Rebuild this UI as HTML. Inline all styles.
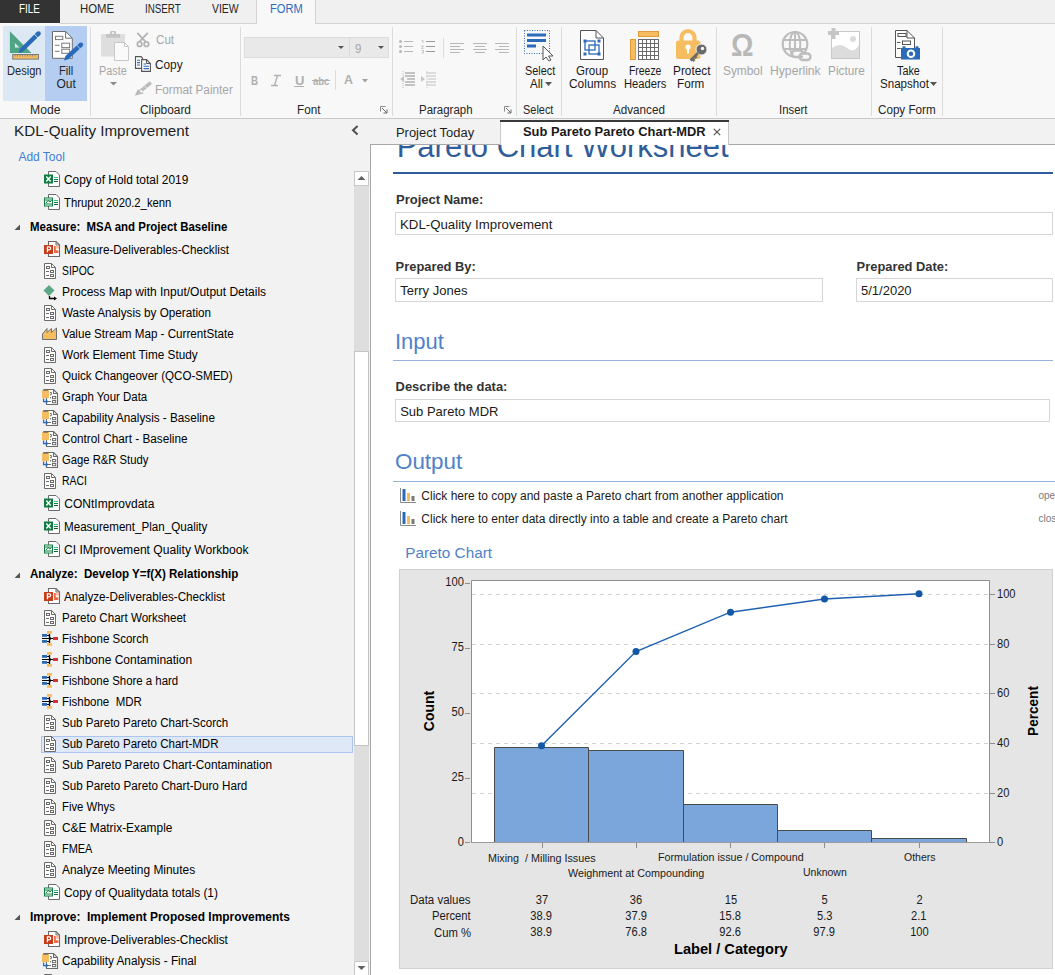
<!DOCTYPE html>
<html><head><meta charset="utf-8"><style>
html,body{margin:0;padding:0;width:1055px;height:975px;overflow:hidden;background:#fff;}
body{position:relative;font-family:"Liberation Sans",sans-serif;}
.t{position:absolute;white-space:pre;line-height:1;}
.r{position:absolute;}
svg.r{overflow:visible;}
</style></head><body>
<div class="r" style="left:0px;top:0px;width:1055px;height:23px;background:#f0f0f0"></div>
<div class="r" style="left:0px;top:0px;width:60px;height:23px;background:#333333"></div>
<div class="t" style="left:19.10px;top:3.00px;font-size:12px;color:#ffffff;transform:scaleX(0.8247);transform-origin:0 0;">FILE</div>
<div class="t" style="left:79.50px;top:3.00px;font-size:12px;color:#262626;transform:scaleX(0.9472);transform-origin:0 0;">HOME</div>
<div class="t" style="left:145.40px;top:3.00px;font-size:12px;color:#262626;transform:scaleX(0.8153);transform-origin:0 0;">INSERT</div>
<div class="t" style="left:212.30px;top:3.00px;font-size:12px;color:#262626;transform:scaleX(0.8706);transform-origin:0 0;">VIEW</div>
<div class="r" style="left:0px;top:23px;width:1055px;height:95px;background:#f8f8f8"></div>
<div class="r" style="left:60px;top:23px;width:197px;height:1px;background:#d2d2d2"></div>
<div class="r" style="left:315px;top:23px;width:740px;height:1px;background:#d2d2d2"></div>
<div class="r" style="left:256px;top:0px;width:1px;height:24px;background:#d2d2d2"></div>
<div class="r" style="left:315px;top:0px;width:1px;height:24px;background:#d2d2d2"></div>
<div class="r" style="left:257px;top:0px;width:58px;height:24px;background:#f8f8f8"></div>
<div class="t" style="left:270.30px;top:3.00px;font-size:12px;color:#2b6bc6;transform:scaleX(0.9256);transform-origin:0 0;">FORM</div>
<div class="r" style="left:0px;top:118px;width:1055px;height:1px;background:#c8c8c8"></div>
<div class="r" style="left:90px;top:27px;width:1px;height:89px;background:#dcdcdc"></div>
<div class="r" style="left:240px;top:27px;width:1px;height:89px;background:#dcdcdc"></div>
<div class="r" style="left:392px;top:27px;width:1px;height:89px;background:#dcdcdc"></div>
<div class="r" style="left:516px;top:27px;width:1px;height:89px;background:#dcdcdc"></div>
<div class="r" style="left:561px;top:27px;width:1px;height:89px;background:#dcdcdc"></div>
<div class="r" style="left:716px;top:27px;width:1px;height:89px;background:#dcdcdc"></div>
<div class="r" style="left:871px;top:27px;width:1px;height:89px;background:#dcdcdc"></div>
<div class="r" style="left:942px;top:27px;width:1px;height:89px;background:#dcdcdc"></div>
<div class="t" style="left:29.60px;top:104.00px;font-size:12px;color:#262626;transform:scaleX(1.0160);transform-origin:0 0;">Mode</div>
<div class="t" style="left:139.60px;top:104.00px;font-size:12px;color:#262626;transform:scaleX(0.9929);transform-origin:0 0;">Clipboard</div>
<div class="t" style="left:296.50px;top:104.00px;font-size:12px;color:#262626;transform:scaleX(0.9787);transform-origin:0 0;">Font</div>
<div class="t" style="left:419.30px;top:104.00px;font-size:12px;color:#262626;transform:scaleX(0.9547);transform-origin:0 0;">Paragraph</div>
<div class="t" style="left:523.40px;top:104.00px;font-size:12px;color:#262626;transform:scaleX(0.9115);transform-origin:0 0;">Select</div>
<div class="t" style="left:612.50px;top:104.00px;font-size:12px;color:#262626;transform:scaleX(0.9724);transform-origin:0 0;">Advanced</div>
<div class="t" style="left:779.40px;top:104.00px;font-size:12px;color:#262626;transform:scaleX(0.9463);transform-origin:0 0;">Insert</div>
<div class="t" style="left:877.60px;top:104.00px;font-size:12px;color:#262626;transform:scaleX(0.9706);transform-origin:0 0;">Copy Form</div>
<svg class="r" style="left:380px;top:106px" width="8" height="8" viewBox="0 0 8 8"><path d="M0.5 0.5H5.5M0.5 0.5V5.5" stroke="#8a8a8a" fill="none"/><path d="M2 2L7 7M7 3.5V7H3.5" stroke="#6a6a6a" fill="none"/></svg>
<svg class="r" style="left:504px;top:106px" width="8" height="8" viewBox="0 0 8 8"><path d="M0.5 0.5H5.5M0.5 0.5V5.5" stroke="#8a8a8a" fill="none"/><path d="M2 2L7 7M7 3.5V7H3.5" stroke="#6a6a6a" fill="none"/></svg>
<div class="r" style="left:3px;top:26px;width:42px;height:75px;background:#dde8f5"></div>
<div class="r" style="left:45px;top:26px;width:42px;height:75px;background:#b4cdf0"></div>
<svg class="r" style="left:0px;top:25px" width="95" height="40" viewBox="0 0 95 40"><path d="M9.9 6.3V27.9H31.5Z" fill="#4fa583"/><path d="M14.9 18V22.5H19.4Z" fill="#dde8f5"/><rect x="12.7" y="29.5" width="25.8" height="4.6" fill="#f6bd60" stroke="#7a7a7a" stroke-width="1"/><path d="M15 29.5V31.5M17.5 29.5V31.5M20 29.5V31.5M22.5 29.5V31.5M25 29.5V31.5M27.5 29.5V31.5M30 29.5V31.5M32.5 29.5V31.5M35 29.5V31.5" stroke="#7a7a7a" stroke-width="0.8"/><path d="M18.60,28.00 L23.00,26.77 L40.14,9.97 L37.06,6.83 L19.92,23.63 Z" fill="#2a6ab8"/><circle cx="38.60" cy="8.40" r="2.20" fill="#2a6ab8"/><path d="M38.10,12.89 L34.10,8.81" stroke="#dde8f5" stroke-width="0.9"/></svg>
<svg class="r" style="left:0px;top:25px" width="95" height="40" viewBox="0 0 95 40"><path d="M52.5 6.5H65.6L72.3 13.2V33.3H52.5Z" fill="#fff" stroke="#6e6e6e" stroke-width="1"/><path d="M65.6 6.5V13.2H72.3" fill="none" stroke="#6e6e6e"/><rect x="55.5" y="11.3" width="7.3" height="3.3" fill="none" stroke="#7a7a7a"/><path d="M55 20.3H59.5M55 26.3H59.5" stroke="#7a7a7a"/><rect x="61.8" y="18.2" width="7.8" height="4.4" fill="none" stroke="#7a7a7a"/><rect x="61.8" y="24.2" width="7.8" height="4.1" fill="none" stroke="#7a7a7a"/><path d="M64.00,35.40 L68.43,34.29 L82.50,21.21 L79.50,17.99 L65.43,31.07 Z" fill="#2a6ab8"/><circle cx="81.00" cy="19.60" r="2.20" fill="#2a6ab8"/><path d="M80.38,24.08 L76.49,19.89" stroke="#b4cdf0" stroke-width="0.9"/></svg>
<div class="t" style="left:6.80px;top:65.00px;font-size:12px;color:#262626;transform:scaleX(0.9236);transform-origin:0 0;">Design</div>
<div class="t" style="left:58.50px;top:65.00px;font-size:12px;color:#262626;transform:scaleX(0.9263);transform-origin:0 0;">Fill</div>
<div class="t" style="left:56.40px;top:78.00px;font-size:12px;color:#262626;transform-origin:0 0;">Out</div>
<svg class="r" style="left:100px;top:30px" width="31" height="32" viewBox="0 0 31 32"><rect x="1" y="4" width="24" height="22.5" fill="#dedede"/><rect x="6" y="4" width="14" height="3.7" fill="#c4c4c4"/><rect x="10" y="1" width="6" height="4" rx="1" fill="#c4c4c4"/><rect x="12" y="2.2" width="2" height="1.6" fill="#f8f8f8"/><path d="M14.5 12.5H24.5L28.5 16.5V30.5H14.5Z" fill="#fafafa" stroke="#c8c8c8" stroke-width="1"/><path d="M24.5 12.5V16.5H28.5" fill="none" stroke="#c8c8c8"/></svg>
<div class="t" style="left:99.30px;top:65.00px;font-size:12px;color:#a6a6a6;transform:scaleX(0.9027);transform-origin:0 0;">Paste</div>
<svg class="r" style="left:110px;top:82px" width="7" height="4" viewBox="0 0 7 4"><path d="M0 0H7L3.5 3.5Z" fill="#8a8a8a"/></svg>
<svg class="r" style="left:135px;top:32px" width="16" height="16" viewBox="0 0 16 16"><path d="M2.3 0.8L10.7 9.8M12.7 0.8L4.3 9.8" stroke="#b4b4b4" stroke-width="1.8"/><circle cx="4.6" cy="12.2" r="2.3" fill="none" stroke="#b4b4b4" stroke-width="1.7"/><circle cx="11.4" cy="12.2" r="2.3" fill="none" stroke="#b4b4b4" stroke-width="1.7"/></svg>
<div class="t" style="left:155.60px;top:34.00px;font-size:12px;color:#a6a6a6;transform:scaleX(0.9692);transform-origin:0 0;">Cut</div>
<svg class="r" style="left:134px;top:56px" width="18" height="17" viewBox="0 0 18 17"><path d="M1.5 0.6H7L8.5 2.1V12.4H1.5Z" fill="#fff" stroke="#555" stroke-width="1.1"/><path d="M3 4.2H6M3 6.6H6M3 9H6" stroke="#2a6ab8" stroke-width="1.1"/><path d="M7.6 3.6H12.5L16.4 7.5V15.4H7.6Z" fill="#fff" stroke="#555" stroke-width="1.1"/><path d="M12.5 3.6V7.5H16.4" fill="none" stroke="#555" stroke-width="1"/><path d="M9.5 8H12M9.5 10.3H15M9.5 12.6H15" stroke="#2a6ab8" stroke-width="1.1"/></svg>
<div class="t" style="left:155.40px;top:59.00px;font-size:12px;color:#1a1a1a;transform:scaleX(0.9852);transform-origin:0 0;">Copy</div>
<svg class="r" style="left:134px;top:81px" width="18" height="16" viewBox="0 0 18 16"><path d="M0.8 14.8L3.8 8.2L10 12.2Z" fill="#bababa"/><path d="M5.5 11L16.8 1.6" stroke="#bababa" stroke-width="3.4"/><circle cx="7.3" cy="10.2" r="1.3" fill="#f8f8f8"/><path d="M10.8 5.2L12.6 7" stroke="#f8f8f8" stroke-width="0.8"/></svg>
<div class="t" style="left:155.40px;top:84.00px;font-size:12px;color:#a6a6a6;transform:scaleX(0.9803);transform-origin:0 0;">Format Painter</div>
<div class="r" style="left:244px;top:37px;width:145px;height:21px;background:#e9e9e9;box-sizing:border-box;border:1px solid #dcdcdc"></div>
<div class="r" style="left:349px;top:38px;width:1px;height:19px;background:#dcdcdc"></div>
<svg class="r" style="left:338px;top:46px" width="6" height="3" viewBox="0 0 6 3"><path d="M0 0H6L3 3Z" fill="#555"/></svg>
<svg class="r" style="left:378px;top:46px" width="6" height="3" viewBox="0 0 6 3"><path d="M0 0H6L3 3Z" fill="#555"/></svg>
<div class="t" style="left:354.60px;top:43.00px;font-size:12px;color:#a6a6a6;transform:scaleX(0.9589);transform-origin:0 0;">9</div>
<div class="t" style="left:251.40px;top:75.00px;font-size:12px;color:#b0b0b0;font-weight:bold;transform:scaleX(0.8193);transform-origin:0 0;">B</div>
<svg class="r" style="left:270px;top:75px" width="12" height="11" viewBox="0 0 12 11"><path d="M4 0.5H11M1 10.5H8M7.5 0.5L4.5 10.5" stroke="#b0b0b0" stroke-width="1.3" fill="none"/></svg>
<div class="t" style="left:294.60px;top:75.00px;font-size:12px;color:#b0b0b0;font-weight:bold;transform:scaleX(1.0847);transform-origin:0 0;">U</div>
<div class="r" style="left:294px;top:86px;width:10px;height:1px;background:#b0b0b0"></div>
<div class="t" style="left:312.80px;top:76.00px;font-size:11px;color:#b0b0b0;font-weight:bold;transform:scaleX(0.8652);transform-origin:0 0;">abc</div>
<div class="r" style="left:312px;top:80px;width:18px;height:1px;background:#b0b0b0"></div>
<div class="r" style="left:335px;top:70px;width:1px;height:20px;background:#dcdcdc"></div>
<div class="t" style="left:344.00px;top:73.00px;font-size:13px;color:#b0b0b0;font-weight:bold;transform:scaleX(0.9586);transform-origin:0 0;">A</div>
<svg class="r" style="left:362px;top:79px" width="6" height="3.5" viewBox="0 0 6 3.5"><path d="M0 0H6L3 3.5Z" fill="#a0a0a0"/></svg>
<svg class="r" style="left:399px;top:40px" width="15" height="14" viewBox="0 0 15 14"><circle cx="1.5" cy="1.5" r="1.5" fill="#b8b8b8"/><circle cx="1.5" cy="6.5" r="1.5" fill="#b8b8b8"/><circle cx="1.5" cy="11.5" r="1.5" fill="#b8b8b8"/><path d="M5 1.5H14M5 6.5H14M5 11.5H14" stroke="#b8b8b8"/></svg>
<svg class="r" style="left:421px;top:40px" width="15" height="14" viewBox="0 0 15 14"><path d="M0.5 0.5H2V3 M0 6H2.5L0.5 8.5H2.5 M0.5 10.5H2.5V13H0.5" stroke="#b8b8b8" fill="none" stroke-width="0.8"/><path d="M5 1.5H14M5 6.5H14M5 11.5H14" stroke="#9a9a9a" stroke-width="1.2"/></svg>
<div class="r" style="left:443px;top:38px;width:1px;height:20px;background:#dcdcdc"></div>
<svg class="r" style="left:450px;top:42px" width="15" height="11" viewBox="0 0 15 11"><path d="M0 1.5H14M0 4.5H10M0 7.5H14M0 10.5H10" stroke="#b8b8b8" stroke-width="1"/></svg>
<svg class="r" style="left:473px;top:42px" width="15" height="11" viewBox="0 0 15 11"><path d="M0 1.5H14M2 4.5H12M0 7.5H14M2 10.5H12" stroke="#b8b8b8" stroke-width="1"/></svg>
<svg class="r" style="left:495px;top:42px" width="15" height="11" viewBox="0 0 15 11"><path d="M0 1.5H14M4 4.5H14M0 7.5H14M4 10.5H14" stroke="#b8b8b8" stroke-width="1"/></svg>
<svg class="r" style="left:399px;top:71px" width="17" height="17" viewBox="0 0 17 17"><path d="M6 2H16M6 5H16M8 8H16M6 11H16M6 14H16" stroke="#8e8e8e" stroke-width="1.2"/><path d="M1 8L5 5V11Z" fill="#c6c6c6"/><path d="M4 0V17" stroke="#bdbdbd" stroke-dasharray="1 1"/></svg>
<svg class="r" style="left:420px;top:71px" width="17" height="17" viewBox="0 0 17 17"><path d="M6 2H16M6 5H16M8 8H16M6 11H16M6 14H16" stroke="#c0c0c0" stroke-width="1.2"/><path d="M5 8L1 5V11Z" fill="#c6c6c6"/><path d="M7 0V17" stroke="#cfcfcf" stroke-dasharray="1 1"/></svg>
<svg class="r" style="left:523px;top:29px" width="34" height="33" viewBox="0 0 34 33"><rect x="1.5" y="1.5" width="25" height="23" fill="none" stroke="#2a6ab8" stroke-dasharray="1 1.5"/><rect x="4" y="4.5" width="19" height="3" fill="#2a6ab8"/><rect x="4" y="10" width="19" height="3" fill="#2a6ab8"/><rect x="4" y="15.5" width="9" height="3" fill="#2a6ab8"/><path d="M20 17 L20 31 L23 28 L26 32 L28 31 L25.5 27 L30 27 Z" fill="#fff" stroke="#555" stroke-width="1"/></svg>
<div class="t" style="left:524.50px;top:65.00px;font-size:12px;color:#1a1a1a;transform:scaleX(0.9055);transform-origin:0 0;">Select</div>
<div class="t" style="left:529.60px;top:78.00px;font-size:12px;color:#1a1a1a;transform:scaleX(0.9598);transform-origin:0 0;">All</div>
<svg class="r" style="left:545px;top:82px" width="7" height="4" viewBox="0 0 7 4"><path d="M0 0H7L3.5 4Z" fill="#555"/></svg>
<svg class="r" style="left:579px;top:29px" width="27" height="32" viewBox="0 0 27 32"><path d="M1.5 1.5H17L24.5 9V30.5H1.5Z" fill="#fff" stroke="#555"/><path d="M17 1.5V9H24.5" fill="none" stroke="#555"/><rect x="6" y="12" width="10" height="9" fill="none" stroke="#2a6ab8" stroke-width="1.3"/><rect x="10" y="16" width="10" height="9" fill="none" stroke="#2a6ab8" stroke-width="1.3"/><rect x="4.5" y="10.5" width="3" height="3" fill="#2a6ab8"/><rect x="18.5" y="10.5" width="3" height="3" fill="#2a6ab8"/><rect x="4.5" y="23.5" width="3" height="3" fill="#2a6ab8"/><rect x="18.5" y="23.5" width="3" height="3" fill="#2a6ab8"/></svg>
<div class="t" style="left:575.70px;top:65.00px;font-size:12px;color:#1a1a1a;transform:scaleX(0.9624);transform-origin:0 0;">Group</div>
<div class="t" style="left:568.90px;top:78.00px;font-size:12px;color:#1a1a1a;transform:scaleX(0.9947);transform-origin:0 0;">Columns</div>
<svg class="r" style="left:629px;top:30px" width="32" height="31" viewBox="0 0 32 31"><rect x="9.5" y="1.5" width="20" height="5" fill="#f6bd60" stroke="#e39a3b"/><rect x="1.5" y="9.5" width="5" height="20" fill="#f6bd60" stroke="#e39a3b"/><rect x="9.5" y="9.5" width="20" height="20" fill="#fff" stroke="#6a6a6a"/><path d="M13.5 9.5V29.5M17.5 9.5V29.5M21.5 9.5V29.5M25.5 9.5V29.5M9.5 13.5H29.5M9.5 17.5H29.5M9.5 21.5H29.5M9.5 25.5H29.5" stroke="#6a6a6a"/></svg>
<div class="t" style="left:628.60px;top:65.00px;font-size:12px;color:#1a1a1a;transform:scaleX(0.8675);transform-origin:0 0;">Freeze</div>
<div class="t" style="left:623.50px;top:78.00px;font-size:12px;color:#1a1a1a;transform:scaleX(0.9326);transform-origin:0 0;">Headers</div>
<svg class="r" style="left:675px;top:27px" width="33" height="35" viewBox="0 0 33 35"><path d="M6.5 15V10.5A6.5 6.5 0 0 1 19.5 10.5V15" fill="none" stroke="#f6bd60" stroke-width="4.2"/><rect x="1" y="13.5" width="24.5" height="18.5" rx="2.5" fill="#f6bd60"/><circle cx="13" cy="20" r="2.6" fill="#fff"/><rect x="12" y="20" width="2" height="6.5" fill="#fff"/><circle cx="26.5" cy="22.5" r="5.5" fill="#6a6a6a" stroke="#f8f8f8" stroke-width="1"/><circle cx="27.5" cy="21.5" r="1.7" fill="#f8f8f8"/><path d="M23 26L15.5 33.5M17 31.5L19.5 34M19.5 29L21.5 31" stroke="#6a6a6a" stroke-width="2.6"/></svg>
<div class="t" style="left:672.60px;top:65.00px;font-size:12px;color:#1a1a1a;transform:scaleX(0.9864);transform-origin:0 0;">Protect</div>
<div class="t" style="left:677.40px;top:78.00px;font-size:12px;color:#1a1a1a;transform:scaleX(0.9751);transform-origin:0 0;">Form</div>
<div class="t" style="left:730.50px;top:30.00px;font-size:31px;color:#b8b8b8;font-weight:bold;transform:scaleX(0.9053);transform-origin:0 0;">Ω</div>
<svg class="r" style="left:779px;top:28px" width="34" height="34" viewBox="0 0 34 34"><circle cx="16" cy="16.3" r="12.3" fill="none" stroke="#bdbdbd" stroke-width="2.2"/><ellipse cx="16" cy="16.3" rx="5.3" ry="12.3" fill="none" stroke="#bdbdbd" stroke-width="2"/><path d="M4 12H28M4 21H28M16 4V28.5" stroke="#bdbdbd" stroke-width="2"/><rect x="13" y="22.5" width="11" height="6.5" rx="3.2" fill="#f8f8f8" stroke="#bdbdbd" stroke-width="2.4"/><rect x="20.5" y="25.5" width="11" height="6.5" rx="3.2" fill="#f8f8f8" stroke="#bdbdbd" stroke-width="2.4"/><path d="M20.5 28.7H24" stroke="#bdbdbd" stroke-width="2.4"/></svg>
<svg class="r" style="left:828px;top:28px" width="34" height="33" viewBox="0 0 34 33"><rect x="3.5" y="3.5" width="28" height="27" fill="#fff" stroke="#c8c8c8"/><path d="M4 30 V20 Q12 14 19 20 T31 17 V30Z" fill="#dcdcdc"/><circle cx="25" cy="11" r="3" fill="#dcdcdc"/><rect x="0" y="3" width="11" height="4" fill="#c6c6c6"/><rect x="3.5" y="0" width="4" height="11" fill="#c6c6c6"/></svg>
<div class="t" style="left:723.20px;top:65.00px;font-size:12px;color:#a6a6a6;transform:scaleX(0.9896);transform-origin:0 0;">Symbol</div>
<div class="t" style="left:770.30px;top:65.00px;font-size:12px;color:#a6a6a6;transform:scaleX(1.0137);transform-origin:0 0;">Hyperlink</div>
<div class="t" style="left:828.30px;top:65.00px;font-size:12px;color:#a6a6a6;transform:scaleX(0.9853);transform-origin:0 0;">Picture</div>
<svg class="r" style="left:893px;top:29px" width="29" height="33" viewBox="0 0 29 33"><path d="M2.5 1.5H14L21.5 9V28.5H2.5Z" fill="#fff" stroke="#555"/><path d="M14 1.5V9H21.5" fill="none" stroke="#555"/><rect x="5" y="4.5" width="8" height="3" fill="none" stroke="#555"/><path d="M4 13.5H7.5M4 19.5H7.5" stroke="#555"/><rect x="9.5" y="12" width="8" height="3.5" fill="none" stroke="#555"/><path d="M4 19.5H7.5" stroke="#555"/><rect x="8" y="19" width="19" height="11.5" fill="#2a6ab8"/><rect x="9.5" y="17.3" width="3" height="2.5" fill="#2a6ab8"/><rect x="22.5" y="17.3" width="3" height="2.5" fill="#2a6ab8"/><circle cx="18" cy="24.8" r="4.3" fill="#fff"/><circle cx="18" cy="24.8" r="2.2" fill="#2a6ab8"/></svg>
<div class="t" style="left:896.50px;top:65.00px;font-size:12px;color:#1a1a1a;transform:scaleX(0.8995);transform-origin:0 0;">Take</div>
<div class="t" style="left:879.50px;top:78.00px;font-size:12px;color:#1a1a1a;transform:scaleX(0.9643);transform-origin:0 0;">Snapshot</div>
<svg class="r" style="left:930px;top:82px" width="7" height="4" viewBox="0 0 7 4"><path d="M0 0H7L3.5 4Z" fill="#555"/></svg>
<div class="r" style="left:0px;top:119px;width:370px;height:856px;background:#f2f2f2"></div>
<div class="t" style="left:13.60px;top:123.00px;font-size:15px;color:#1e1e1e;transform:scaleX(1.0141);transform-origin:0 0;">KDL-Quality Improvement</div>
<svg class="r" style="left:351px;top:125px" width="9" height="11" viewBox="0 0 9 11"><path d="M6.6 0.9L2 5.2L6.6 9.5" stroke="#505050" stroke-width="2" fill="none"/></svg>
<div class="t" style="left:18.40px;top:151.00px;font-size:12px;color:#3d7fd8;transform-origin:0 0;">Add Tool</div>
<div class="r" style="left:41px;top:736px;width:312px;height:17px;background:#dfe8f6;box-sizing:border-box;border:1px solid #a8c6ef"></div>
<svg class="r" style="left:44px;top:171px" width="17" height="17" viewBox="0 0 17 17"><path d="M4.5 0.5H12L15.5 4V15.5H4.5Z" fill="#fff" stroke="#6b6b6b"/><path d="M10 6.5H14" stroke="#33c481"/><path d="M10 8.5H14" stroke="#107c41"/><path d="M10 10.5H14" stroke="#185c37"/><rect x="0" y="3.5" width="9" height="9" fill="#107c41"/><path d="M2.3 5.5L6.7 10.5M6.7 5.5L2.3 10.5" stroke="#fff" stroke-width="1.4"/></svg>
<div class="t" style="left:64.30px;top:174.00px;font-size:12px;color:#000;transform:scaleX(0.9911);transform-origin:0 0;">Copy of Hold total 2019</div>
<svg class="r" style="left:44px;top:194px" width="17" height="17" viewBox="0 0 17 17"><path d="M4.5 0.5H12L15.5 4V15.5H4.5Z" fill="#fff" stroke="#6b6b6b"/><path d="M10 6.5H14" stroke="#33c481"/><path d="M10 8.5H14" stroke="#107c41"/><path d="M10 10.5H14" stroke="#185c37"/><rect x="0.5" y="4" width="8" height="8" fill="#fff" stroke="#107c41"/><path d="M1 6H8M1 10H8" stroke="#107c41"/><path d="M2 9L4 6.5L6 8L7.5 6.5" stroke="#107c41" fill="none"/></svg>
<div class="t" style="left:64.30px;top:197.00px;font-size:12px;color:#000;transform:scaleX(0.9413);transform-origin:0 0;">Thruput 2020.2_kenn</div>
<svg class="r" style="left:14px;top:224px" width="7" height="7" viewBox="0 0 7 7"><path d="M6 0.5V6H0.5Z" fill="#555"/></svg>
<div class="t" style="left:30.40px;top:221.00px;font-size:12px;color:#000;font-weight:bold;transform:scaleX(0.9533);transform-origin:0 0;">Measure:  MSA and Project Baseline</div>
<svg class="r" style="left:44px;top:241px" width="17" height="17" viewBox="0 0 17 17"><path d="M4.5 0.5H12L15.5 4V15.5H4.5Z" fill="#fff" stroke="#6b6b6b" stroke-width="1.1"/><path d="M12 0.5V4H15.5" fill="none" stroke="#6b6b6b" stroke-width="1"/><path d="M10 5V12H14.3A3.8 3.8 0 0 0 14.3 9.2H11.8V5Z" fill="#ed6c47"/><rect x="12.2" y="4.5" width="2.8" height="3.2" fill="#ffb8a0"/><rect x="0" y="4" width="9" height="9" fill="#c43e1c"/><path d="M3.4 11.2V5.8H5.2A1.5 1.5 0 0 1 5.2 8.8H3.4" stroke="#fff" stroke-width="1.2" fill="none"/></svg>
<div class="t" style="left:64.30px;top:244.00px;font-size:12px;color:#000;transform:scaleX(0.9741);transform-origin:0 0;">Measure-Deliverables-Checklist</div>
<svg class="r" style="left:44px;top:263px" width="13" height="17" viewBox="0 0 13 17"><path d="M0.5 0.5H7.5L11.5 4.5V15.5H0.5Z" fill="#fff" stroke="#6b6b6b"/><path d="M7.5 0.5V4.5H11.5" fill="none" stroke="#6b6b6b"/><rect x="2.5" y="3.5" width="3" height="2" fill="none" stroke="#6b6b6b"/><path d="M2 8.5H5M2 12.5H5" stroke="#6b6b6b"/><rect x="6.5" y="7.5" width="3" height="2" fill="none" stroke="#6b6b6b"/><rect x="6.5" y="11.5" width="3" height="2" fill="none" stroke="#6b6b6b"/></svg>
<div class="t" style="left:62.00px;top:265.00px;font-size:12px;color:#000;transform:scaleX(0.8623);transform-origin:0 0;">SIPOC</div>
<svg class="r" style="left:43px;top:285px" width="16" height="17" viewBox="0 0 16 17"><path d="M6 0L11.5 5.5L6 11L0.5 5.5Z" fill="#5aa886"/><path d="M6.5 11V13.5H12" stroke="#000" stroke-width="1.3" fill="none"/><path d="M11 11.5L14 13.5L11 15.5Z" fill="#000"/></svg>
<div class="t" style="left:62.00px;top:286.00px;font-size:12px;color:#000;transform-origin:0 0;">Process Map with Input/Output Details</div>
<svg class="r" style="left:44px;top:305px" width="13" height="17" viewBox="0 0 13 17"><path d="M0.5 0.5H7.5L11.5 4.5V15.5H0.5Z" fill="#fff" stroke="#6b6b6b"/><path d="M7.5 0.5V4.5H11.5" fill="none" stroke="#6b6b6b"/><rect x="2.5" y="3.5" width="3" height="2" fill="none" stroke="#6b6b6b"/><path d="M2 8.5H5M2 12.5H5" stroke="#6b6b6b"/><rect x="6.5" y="7.5" width="3" height="2" fill="none" stroke="#6b6b6b"/><rect x="6.5" y="11.5" width="3" height="2" fill="none" stroke="#6b6b6b"/></svg>
<div class="t" style="left:62.00px;top:307.00px;font-size:12px;color:#000;transform:scaleX(0.9741);transform-origin:0 0;">Waste Analysis by Operation</div>
<svg class="r" style="left:42px;top:327px" width="16" height="13" viewBox="0 0 16 13"><path d="M0.5 12.5V7L5 1.5V5.5L9.5 1.5V5.5L14.5 1V12.5Z" fill="#f6bd60" stroke="#707070" stroke-linejoin="round"/></svg>
<div class="t" style="left:62.00px;top:328.00px;font-size:12px;color:#000;transform:scaleX(0.9684);transform-origin:0 0;">Value Stream Map - CurrentState</div>
<svg class="r" style="left:44px;top:347px" width="13" height="17" viewBox="0 0 13 17"><path d="M0.5 0.5H7.5L11.5 4.5V15.5H0.5Z" fill="#fff" stroke="#6b6b6b"/><path d="M7.5 0.5V4.5H11.5" fill="none" stroke="#6b6b6b"/><rect x="2.5" y="3.5" width="3" height="2" fill="none" stroke="#6b6b6b"/><path d="M2 8.5H5M2 12.5H5" stroke="#6b6b6b"/><rect x="6.5" y="7.5" width="3" height="2" fill="none" stroke="#6b6b6b"/><rect x="6.5" y="11.5" width="3" height="2" fill="none" stroke="#6b6b6b"/></svg>
<div class="t" style="left:62.00px;top:349.00px;font-size:12px;color:#000;transform:scaleX(0.9791);transform-origin:0 0;">Work Element Time Study</div>
<svg class="r" style="left:44px;top:368px" width="13" height="17" viewBox="0 0 13 17"><path d="M0.5 0.5H7.5L11.5 4.5V15.5H0.5Z" fill="#fff" stroke="#6b6b6b"/><path d="M7.5 0.5V4.5H11.5" fill="none" stroke="#6b6b6b"/><rect x="2.5" y="3.5" width="3" height="2" fill="none" stroke="#6b6b6b"/><path d="M2 8.5H5M2 12.5H5" stroke="#6b6b6b"/><rect x="6.5" y="7.5" width="3" height="2" fill="none" stroke="#6b6b6b"/><rect x="6.5" y="11.5" width="3" height="2" fill="none" stroke="#6b6b6b"/></svg>
<div class="t" style="left:62.00px;top:370.00px;font-size:12px;color:#000;transform:scaleX(0.9654);transform-origin:0 0;">Quick Changeover (QCO-SMED)</div>
<svg class="r" style="left:42px;top:389px" width="17" height="17" viewBox="0 0 17 17"><path d="M4.5 15.5V0.5H11.5L15.5 4.5V15.5Z" fill="#fff" stroke="#6b6b6b" stroke-width="1.1"/><path d="M11.5 0.5V4.5H15.5" fill="none" stroke="#6b6b6b" stroke-width="1.1"/><path d="M8 3.5H9.3V5.8H8" fill="none" stroke="#6b6b6b"/><circle cx="8.6" cy="8.7" r="0.7" fill="#6b6b6b"/><rect x="10.5" y="7.5" width="3.2" height="2.2" fill="none" stroke="#6b6b6b"/><path d="M6 12.5H9" stroke="#6b6b6b"/><rect x="10.5" y="11.5" width="3.2" height="2.2" fill="none" stroke="#6b6b6b"/><rect x="0" y="1" width="7" height="8" fill="#f6bd60"/><rect x="1.3" y="0" width="4.6" height="1.7" fill="#6b6b6b"/><path d="M1.6 9.5V12.6H5" stroke="#2a6ab8" stroke-width="1.3" fill="none"/><path d="M3.8 10.8L5.6 12.6L3.8 14.4" stroke="#2a6ab8" stroke-width="1.1" fill="none"/></svg>
<div class="t" style="left:62.00px;top:391.00px;font-size:12px;color:#000;transform:scaleX(0.9530);transform-origin:0 0;">Graph Your Data</div>
<svg class="r" style="left:42px;top:410px" width="17" height="17" viewBox="0 0 17 17"><path d="M4.5 15.5V0.5H11.5L15.5 4.5V15.5Z" fill="#fff" stroke="#6b6b6b" stroke-width="1.1"/><path d="M11.5 0.5V4.5H15.5" fill="none" stroke="#6b6b6b" stroke-width="1.1"/><path d="M8 3.5H9.3V5.8H8" fill="none" stroke="#6b6b6b"/><circle cx="8.6" cy="8.7" r="0.7" fill="#6b6b6b"/><rect x="10.5" y="7.5" width="3.2" height="2.2" fill="none" stroke="#6b6b6b"/><path d="M6 12.5H9" stroke="#6b6b6b"/><rect x="10.5" y="11.5" width="3.2" height="2.2" fill="none" stroke="#6b6b6b"/><rect x="0" y="1" width="7" height="8" fill="#f6bd60"/><rect x="1.3" y="0" width="4.6" height="1.7" fill="#6b6b6b"/><path d="M1.6 9.5V12.6H5" stroke="#2a6ab8" stroke-width="1.3" fill="none"/><path d="M3.8 10.8L5.6 12.6L3.8 14.4" stroke="#2a6ab8" stroke-width="1.1" fill="none"/></svg>
<div class="t" style="left:62.00px;top:412.00px;font-size:12px;color:#000;transform:scaleX(0.9754);transform-origin:0 0;">Capability Analysis - Baseline</div>
<svg class="r" style="left:42px;top:431px" width="17" height="17" viewBox="0 0 17 17"><path d="M4.5 15.5V0.5H11.5L15.5 4.5V15.5Z" fill="#fff" stroke="#6b6b6b" stroke-width="1.1"/><path d="M11.5 0.5V4.5H15.5" fill="none" stroke="#6b6b6b" stroke-width="1.1"/><path d="M8 3.5H9.3V5.8H8" fill="none" stroke="#6b6b6b"/><circle cx="8.6" cy="8.7" r="0.7" fill="#6b6b6b"/><rect x="10.5" y="7.5" width="3.2" height="2.2" fill="none" stroke="#6b6b6b"/><path d="M6 12.5H9" stroke="#6b6b6b"/><rect x="10.5" y="11.5" width="3.2" height="2.2" fill="none" stroke="#6b6b6b"/><rect x="0" y="1" width="7" height="8" fill="#f6bd60"/><rect x="1.3" y="0" width="4.6" height="1.7" fill="#6b6b6b"/><path d="M1.6 9.5V12.6H5" stroke="#2a6ab8" stroke-width="1.3" fill="none"/><path d="M3.8 10.8L5.6 12.6L3.8 14.4" stroke="#2a6ab8" stroke-width="1.1" fill="none"/></svg>
<div class="t" style="left:62.00px;top:433.00px;font-size:12px;color:#000;transform:scaleX(0.9800);transform-origin:0 0;">Control Chart - Baseline</div>
<svg class="r" style="left:42px;top:452px" width="17" height="17" viewBox="0 0 17 17"><path d="M4.5 15.5V0.5H11.5L15.5 4.5V15.5Z" fill="#fff" stroke="#6b6b6b" stroke-width="1.1"/><path d="M11.5 0.5V4.5H15.5" fill="none" stroke="#6b6b6b" stroke-width="1.1"/><path d="M8 3.5H9.3V5.8H8" fill="none" stroke="#6b6b6b"/><circle cx="8.6" cy="8.7" r="0.7" fill="#6b6b6b"/><rect x="10.5" y="7.5" width="3.2" height="2.2" fill="none" stroke="#6b6b6b"/><path d="M6 12.5H9" stroke="#6b6b6b"/><rect x="10.5" y="11.5" width="3.2" height="2.2" fill="none" stroke="#6b6b6b"/><rect x="0" y="1" width="7" height="8" fill="#f6bd60"/><rect x="1.3" y="0" width="4.6" height="1.7" fill="#6b6b6b"/><path d="M1.6 9.5V12.6H5" stroke="#2a6ab8" stroke-width="1.3" fill="none"/><path d="M3.8 10.8L5.6 12.6L3.8 14.4" stroke="#2a6ab8" stroke-width="1.1" fill="none"/></svg>
<div class="t" style="left:62.00px;top:454.00px;font-size:12px;color:#000;transform:scaleX(0.9376);transform-origin:0 0;">Gage R&amp;R Study</div>
<svg class="r" style="left:44px;top:473px" width="13" height="17" viewBox="0 0 13 17"><path d="M0.5 0.5H7.5L11.5 4.5V15.5H0.5Z" fill="#fff" stroke="#6b6b6b"/><path d="M7.5 0.5V4.5H11.5" fill="none" stroke="#6b6b6b"/><rect x="2.5" y="3.5" width="3" height="2" fill="none" stroke="#6b6b6b"/><path d="M2 8.5H5M2 12.5H5" stroke="#6b6b6b"/><rect x="6.5" y="7.5" width="3" height="2" fill="none" stroke="#6b6b6b"/><rect x="6.5" y="11.5" width="3" height="2" fill="none" stroke="#6b6b6b"/></svg>
<div class="t" style="left:62.00px;top:475.00px;font-size:12px;color:#000;transform:scaleX(0.8720);transform-origin:0 0;">RACI</div>
<svg class="r" style="left:44px;top:495px" width="17" height="17" viewBox="0 0 17 17"><path d="M4.5 0.5H12L15.5 4V15.5H4.5Z" fill="#fff" stroke="#6b6b6b"/><path d="M10 6.5H14" stroke="#33c481"/><path d="M10 8.5H14" stroke="#107c41"/><path d="M10 10.5H14" stroke="#185c37"/><rect x="0" y="3.5" width="9" height="9" fill="#107c41"/><path d="M2.3 5.5L6.7 10.5M6.7 5.5L2.3 10.5" stroke="#fff" stroke-width="1.4"/></svg>
<div class="t" style="left:64.30px;top:498.00px;font-size:12px;color:#000;transform-origin:0 0;">CONtImprovdata</div>
<svg class="r" style="left:44px;top:518px" width="17" height="17" viewBox="0 0 17 17"><path d="M4.5 0.5H12L15.5 4V15.5H4.5Z" fill="#fff" stroke="#6b6b6b"/><path d="M10 6.5H14" stroke="#33c481"/><path d="M10 8.5H14" stroke="#107c41"/><path d="M10 10.5H14" stroke="#185c37"/><rect x="0" y="3.5" width="9" height="9" fill="#107c41"/><path d="M2.3 5.5L6.7 10.5M6.7 5.5L2.3 10.5" stroke="#fff" stroke-width="1.4"/></svg>
<div class="t" style="left:64.30px;top:521.00px;font-size:12px;color:#000;transform:scaleX(0.9684);transform-origin:0 0;">Measurement_Plan_Quality</div>
<svg class="r" style="left:44px;top:541px" width="17" height="17" viewBox="0 0 17 17"><path d="M4.5 0.5H12L15.5 4V15.5H4.5Z" fill="#fff" stroke="#6b6b6b"/><path d="M10 6.5H14" stroke="#33c481"/><path d="M10 8.5H14" stroke="#107c41"/><path d="M10 10.5H14" stroke="#185c37"/><rect x="0.5" y="4" width="8" height="8" fill="#fff" stroke="#107c41"/><path d="M1 6H8M1 10H8" stroke="#107c41"/><path d="M2 9L4 6.5L6 8L7.5 6.5" stroke="#107c41" fill="none"/></svg>
<div class="t" style="left:64.30px;top:544.00px;font-size:12px;color:#000;transform:scaleX(1.0072);transform-origin:0 0;">CI IMprovement Quality Workbook</div>
<svg class="r" style="left:14px;top:572px" width="7" height="7" viewBox="0 0 7 7"><path d="M6 0.5V6H0.5Z" fill="#555"/></svg>
<div class="t" style="left:30.40px;top:568.00px;font-size:12px;color:#000;font-weight:bold;transform:scaleX(0.9641);transform-origin:0 0;">Analyze:  Develop Y=f(X) Relationship</div>
<svg class="r" style="left:44px;top:588px" width="17" height="17" viewBox="0 0 17 17"><path d="M4.5 0.5H12L15.5 4V15.5H4.5Z" fill="#fff" stroke="#6b6b6b" stroke-width="1.1"/><path d="M12 0.5V4H15.5" fill="none" stroke="#6b6b6b" stroke-width="1"/><path d="M10 5V12H14.3A3.8 3.8 0 0 0 14.3 9.2H11.8V5Z" fill="#ed6c47"/><rect x="12.2" y="4.5" width="2.8" height="3.2" fill="#ffb8a0"/><rect x="0" y="4" width="9" height="9" fill="#c43e1c"/><path d="M3.4 11.2V5.8H5.2A1.5 1.5 0 0 1 5.2 8.8H3.4" stroke="#fff" stroke-width="1.2" fill="none"/></svg>
<div class="t" style="left:64.30px;top:591.00px;font-size:12px;color:#000;transform:scaleX(0.9740);transform-origin:0 0;">Analyze-Deliverables-Checklist</div>
<svg class="r" style="left:44px;top:610px" width="13" height="17" viewBox="0 0 13 17"><path d="M0.5 0.5H7.5L11.5 4.5V15.5H0.5Z" fill="#fff" stroke="#6b6b6b"/><path d="M7.5 0.5V4.5H11.5" fill="none" stroke="#6b6b6b"/><rect x="2.5" y="3.5" width="3" height="2" fill="none" stroke="#6b6b6b"/><path d="M2 8.5H5M2 12.5H5" stroke="#6b6b6b"/><rect x="6.5" y="7.5" width="3" height="2" fill="none" stroke="#6b6b6b"/><rect x="6.5" y="11.5" width="3" height="2" fill="none" stroke="#6b6b6b"/></svg>
<div class="t" style="left:62.00px;top:612.00px;font-size:12px;color:#000;transform:scaleX(0.9657);transform-origin:0 0;">Pareto Chart Worksheet</div>
<svg class="r" style="left:42px;top:631px" width="17" height="16" viewBox="0 0 17 16"><rect x="5" y="0" width="5" height="2.8" fill="#f6bd60"/><rect x="0" y="3" width="5" height="2.8" fill="#2a6ab8"/><rect x="0" y="9" width="5" height="2.8" fill="#2a6ab8"/><rect x="5" y="12" width="5" height="2.8" fill="#f6bd60"/><path d="M0 7.5H11M5 4.5H7.5M5 10.5H7.5" stroke="#000" stroke-width="1"/><path d="M7.5 3V12" stroke="#000" stroke-width="1.3"/><path d="M7.8 5.8L9.8 7.5L7.8 9.2Z" fill="#000"/><rect x="11" y="6" width="5" height="3" fill="#d13438"/></svg>
<div class="t" style="left:62.00px;top:633.00px;font-size:12px;color:#000;transform:scaleX(0.9584);transform-origin:0 0;">Fishbone Scorch</div>
<svg class="r" style="left:42px;top:652px" width="17" height="16" viewBox="0 0 17 16"><rect x="5" y="0" width="5" height="2.8" fill="#f6bd60"/><rect x="0" y="3" width="5" height="2.8" fill="#2a6ab8"/><rect x="0" y="9" width="5" height="2.8" fill="#2a6ab8"/><rect x="5" y="12" width="5" height="2.8" fill="#f6bd60"/><path d="M0 7.5H11M5 4.5H7.5M5 10.5H7.5" stroke="#000" stroke-width="1"/><path d="M7.5 3V12" stroke="#000" stroke-width="1.3"/><path d="M7.8 5.8L9.8 7.5L7.8 9.2Z" fill="#000"/><rect x="11" y="6" width="5" height="3" fill="#d13438"/></svg>
<div class="t" style="left:62.00px;top:654.00px;font-size:12px;color:#000;transform-origin:0 0;">Fishbone Contamination</div>
<svg class="r" style="left:42px;top:673px" width="17" height="16" viewBox="0 0 17 16"><rect x="5" y="0" width="5" height="2.8" fill="#f6bd60"/><rect x="0" y="3" width="5" height="2.8" fill="#2a6ab8"/><rect x="0" y="9" width="5" height="2.8" fill="#2a6ab8"/><rect x="5" y="12" width="5" height="2.8" fill="#f6bd60"/><path d="M0 7.5H11M5 4.5H7.5M5 10.5H7.5" stroke="#000" stroke-width="1"/><path d="M7.5 3V12" stroke="#000" stroke-width="1.3"/><path d="M7.8 5.8L9.8 7.5L7.8 9.2Z" fill="#000"/><rect x="11" y="6" width="5" height="3" fill="#d13438"/></svg>
<div class="t" style="left:62.00px;top:675.00px;font-size:12px;color:#000;transform:scaleX(0.9518);transform-origin:0 0;">Fishbone Shore a hard</div>
<svg class="r" style="left:42px;top:694px" width="17" height="16" viewBox="0 0 17 16"><rect x="5" y="0" width="5" height="2.8" fill="#f6bd60"/><rect x="0" y="3" width="5" height="2.8" fill="#2a6ab8"/><rect x="0" y="9" width="5" height="2.8" fill="#2a6ab8"/><rect x="5" y="12" width="5" height="2.8" fill="#f6bd60"/><path d="M0 7.5H11M5 4.5H7.5M5 10.5H7.5" stroke="#000" stroke-width="1"/><path d="M7.5 3V12" stroke="#000" stroke-width="1.3"/><path d="M7.8 5.8L9.8 7.5L7.8 9.2Z" fill="#000"/><rect x="11" y="6" width="5" height="3" fill="#d13438"/></svg>
<div class="t" style="left:62.00px;top:696.00px;font-size:12px;color:#000;transform:scaleX(0.9572);transform-origin:0 0;">Fishbone  MDR</div>
<svg class="r" style="left:44px;top:715px" width="13" height="17" viewBox="0 0 13 17"><path d="M0.5 0.5H7.5L11.5 4.5V15.5H0.5Z" fill="#fff" stroke="#6b6b6b"/><path d="M7.5 0.5V4.5H11.5" fill="none" stroke="#6b6b6b"/><rect x="2.5" y="3.5" width="3" height="2" fill="none" stroke="#6b6b6b"/><path d="M2 8.5H5M2 12.5H5" stroke="#6b6b6b"/><rect x="6.5" y="7.5" width="3" height="2" fill="none" stroke="#6b6b6b"/><rect x="6.5" y="11.5" width="3" height="2" fill="none" stroke="#6b6b6b"/></svg>
<div class="t" style="left:62.00px;top:717.00px;font-size:12px;color:#000;transform:scaleX(0.9620);transform-origin:0 0;">Sub Pareto Pareto Chart-Scorch</div>
<svg class="r" style="left:44px;top:736px" width="13" height="17" viewBox="0 0 13 17"><path d="M0.5 0.5H7.5L11.5 4.5V15.5H0.5Z" fill="#fff" stroke="#6b6b6b"/><path d="M7.5 0.5V4.5H11.5" fill="none" stroke="#6b6b6b"/><rect x="2.5" y="3.5" width="3" height="2" fill="none" stroke="#6b6b6b"/><path d="M2 8.5H5M2 12.5H5" stroke="#6b6b6b"/><rect x="6.5" y="7.5" width="3" height="2" fill="none" stroke="#6b6b6b"/><rect x="6.5" y="11.5" width="3" height="2" fill="none" stroke="#6b6b6b"/></svg>
<div class="t" style="left:62.00px;top:738.00px;font-size:12px;color:#000;transform:scaleX(0.9617);transform-origin:0 0;">Sub Pareto Pareto Chart-MDR</div>
<svg class="r" style="left:44px;top:757px" width="13" height="17" viewBox="0 0 13 17"><path d="M0.5 0.5H7.5L11.5 4.5V15.5H0.5Z" fill="#fff" stroke="#6b6b6b"/><path d="M7.5 0.5V4.5H11.5" fill="none" stroke="#6b6b6b"/><rect x="2.5" y="3.5" width="3" height="2" fill="none" stroke="#6b6b6b"/><path d="M2 8.5H5M2 12.5H5" stroke="#6b6b6b"/><rect x="6.5" y="7.5" width="3" height="2" fill="none" stroke="#6b6b6b"/><rect x="6.5" y="11.5" width="3" height="2" fill="none" stroke="#6b6b6b"/></svg>
<div class="t" style="left:62.00px;top:759.00px;font-size:12px;color:#000;transform:scaleX(0.9878);transform-origin:0 0;">Sub Pareto Pareto Chart-Contamination</div>
<svg class="r" style="left:44px;top:778px" width="13" height="17" viewBox="0 0 13 17"><path d="M0.5 0.5H7.5L11.5 4.5V15.5H0.5Z" fill="#fff" stroke="#6b6b6b"/><path d="M7.5 0.5V4.5H11.5" fill="none" stroke="#6b6b6b"/><rect x="2.5" y="3.5" width="3" height="2" fill="none" stroke="#6b6b6b"/><path d="M2 8.5H5M2 12.5H5" stroke="#6b6b6b"/><rect x="6.5" y="7.5" width="3" height="2" fill="none" stroke="#6b6b6b"/><rect x="6.5" y="11.5" width="3" height="2" fill="none" stroke="#6b6b6b"/></svg>
<div class="t" style="left:62.00px;top:780.00px;font-size:12px;color:#000;transform:scaleX(0.9714);transform-origin:0 0;">Sub Pareto Pareto Chart-Duro Hard</div>
<svg class="r" style="left:44px;top:799px" width="13" height="17" viewBox="0 0 13 17"><path d="M0.5 0.5H7.5L11.5 4.5V15.5H0.5Z" fill="#fff" stroke="#6b6b6b"/><path d="M7.5 0.5V4.5H11.5" fill="none" stroke="#6b6b6b"/><rect x="2.5" y="3.5" width="3" height="2" fill="none" stroke="#6b6b6b"/><path d="M2 8.5H5M2 12.5H5" stroke="#6b6b6b"/><rect x="6.5" y="7.5" width="3" height="2" fill="none" stroke="#6b6b6b"/><rect x="6.5" y="11.5" width="3" height="2" fill="none" stroke="#6b6b6b"/></svg>
<div class="t" style="left:62.00px;top:801.00px;font-size:12px;color:#000;transform:scaleX(0.9428);transform-origin:0 0;">Five Whys</div>
<svg class="r" style="left:44px;top:820px" width="13" height="17" viewBox="0 0 13 17"><path d="M0.5 0.5H7.5L11.5 4.5V15.5H0.5Z" fill="#fff" stroke="#6b6b6b"/><path d="M7.5 0.5V4.5H11.5" fill="none" stroke="#6b6b6b"/><rect x="2.5" y="3.5" width="3" height="2" fill="none" stroke="#6b6b6b"/><path d="M2 8.5H5M2 12.5H5" stroke="#6b6b6b"/><rect x="6.5" y="7.5" width="3" height="2" fill="none" stroke="#6b6b6b"/><rect x="6.5" y="11.5" width="3" height="2" fill="none" stroke="#6b6b6b"/></svg>
<div class="t" style="left:62.00px;top:822.00px;font-size:12px;color:#000;transform:scaleX(0.9914);transform-origin:0 0;">C&amp;E Matrix-Example</div>
<svg class="r" style="left:44px;top:841px" width="13" height="17" viewBox="0 0 13 17"><path d="M0.5 0.5H7.5L11.5 4.5V15.5H0.5Z" fill="#fff" stroke="#6b6b6b"/><path d="M7.5 0.5V4.5H11.5" fill="none" stroke="#6b6b6b"/><rect x="2.5" y="3.5" width="3" height="2" fill="none" stroke="#6b6b6b"/><path d="M2 8.5H5M2 12.5H5" stroke="#6b6b6b"/><rect x="6.5" y="7.5" width="3" height="2" fill="none" stroke="#6b6b6b"/><rect x="6.5" y="11.5" width="3" height="2" fill="none" stroke="#6b6b6b"/></svg>
<div class="t" style="left:62.00px;top:843.00px;font-size:12px;color:#000;transform:scaleX(0.9120);transform-origin:0 0;">FMEA</div>
<svg class="r" style="left:44px;top:862px" width="13" height="17" viewBox="0 0 13 17"><path d="M0.5 0.5H7.5L11.5 4.5V15.5H0.5Z" fill="#fff" stroke="#6b6b6b"/><path d="M7.5 0.5V4.5H11.5" fill="none" stroke="#6b6b6b"/><rect x="2.5" y="3.5" width="3" height="2" fill="none" stroke="#6b6b6b"/><path d="M2 8.5H5M2 12.5H5" stroke="#6b6b6b"/><rect x="6.5" y="7.5" width="3" height="2" fill="none" stroke="#6b6b6b"/><rect x="6.5" y="11.5" width="3" height="2" fill="none" stroke="#6b6b6b"/></svg>
<div class="t" style="left:62.00px;top:864.00px;font-size:12px;color:#000;transform:scaleX(0.9927);transform-origin:0 0;">Analyze Meeting Minutes</div>
<svg class="r" style="left:44px;top:884px" width="17" height="17" viewBox="0 0 17 17"><path d="M4.5 0.5H12L15.5 4V15.5H4.5Z" fill="#fff" stroke="#6b6b6b"/><path d="M10 6.5H14" stroke="#33c481"/><path d="M10 8.5H14" stroke="#107c41"/><path d="M10 10.5H14" stroke="#185c37"/><rect x="0.5" y="4" width="8" height="8" fill="#fff" stroke="#107c41"/><path d="M1 6H8M1 10H8" stroke="#107c41"/><path d="M2 9L4 6.5L6 8L7.5 6.5" stroke="#107c41" fill="none"/></svg>
<div class="t" style="left:64.30px;top:887.00px;font-size:12px;color:#000;transform:scaleX(0.9903);transform-origin:0 0;">Copy of Qualitydata totals (1)</div>
<svg class="r" style="left:14px;top:914px" width="7" height="7" viewBox="0 0 7 7"><path d="M6 0.5V6H0.5Z" fill="#555"/></svg>
<div class="t" style="left:30.40px;top:911.00px;font-size:12px;color:#000;font-weight:bold;transform:scaleX(0.9943);transform-origin:0 0;">Improve:  Implement Proposed Improvements</div>
<svg class="r" style="left:44px;top:931px" width="17" height="17" viewBox="0 0 17 17"><path d="M4.5 0.5H12L15.5 4V15.5H4.5Z" fill="#fff" stroke="#6b6b6b" stroke-width="1.1"/><path d="M12 0.5V4H15.5" fill="none" stroke="#6b6b6b" stroke-width="1"/><path d="M10 5V12H14.3A3.8 3.8 0 0 0 14.3 9.2H11.8V5Z" fill="#ed6c47"/><rect x="12.2" y="4.5" width="2.8" height="3.2" fill="#ffb8a0"/><rect x="0" y="4" width="9" height="9" fill="#c43e1c"/><path d="M3.4 11.2V5.8H5.2A1.5 1.5 0 0 1 5.2 8.8H3.4" stroke="#fff" stroke-width="1.2" fill="none"/></svg>
<div class="t" style="left:64.30px;top:934.00px;font-size:12px;color:#000;transform:scaleX(0.9870);transform-origin:0 0;">Improve-Deliverables-Checklist</div>
<svg class="r" style="left:42px;top:953px" width="17" height="17" viewBox="0 0 17 17"><path d="M4.5 15.5V0.5H11.5L15.5 4.5V15.5Z" fill="#fff" stroke="#6b6b6b" stroke-width="1.1"/><path d="M11.5 0.5V4.5H15.5" fill="none" stroke="#6b6b6b" stroke-width="1.1"/><path d="M8 3.5H9.3V5.8H8" fill="none" stroke="#6b6b6b"/><circle cx="8.6" cy="8.7" r="0.7" fill="#6b6b6b"/><rect x="10.5" y="7.5" width="3.2" height="2.2" fill="none" stroke="#6b6b6b"/><path d="M6 12.5H9" stroke="#6b6b6b"/><rect x="10.5" y="11.5" width="3.2" height="2.2" fill="none" stroke="#6b6b6b"/><rect x="0" y="1" width="7" height="8" fill="#f6bd60"/><rect x="1.3" y="0" width="4.6" height="1.7" fill="#6b6b6b"/><path d="M1.6 9.5V12.6H5" stroke="#2a6ab8" stroke-width="1.3" fill="none"/><path d="M3.8 10.8L5.6 12.6L3.8 14.4" stroke="#2a6ab8" stroke-width="1.1" fill="none"/></svg>
<div class="t" style="left:62.00px;top:955.00px;font-size:12px;color:#000;transform:scaleX(0.9837);transform-origin:0 0;">Capability Analysis - Final</div>
<svg class="r" style="left:44px;top:974px" width="13" height="17" viewBox="0 0 13 17"><path d="M0.5 0.5H7.5L11.5 4.5V15.5H0.5Z" fill="#fff" stroke="#6b6b6b"/><path d="M7.5 0.5V4.5H11.5" fill="none" stroke="#6b6b6b"/><rect x="2.5" y="3.5" width="3" height="2" fill="none" stroke="#6b6b6b"/><path d="M2 8.5H5M2 12.5H5" stroke="#6b6b6b"/><rect x="6.5" y="7.5" width="3" height="2" fill="none" stroke="#6b6b6b"/><rect x="6.5" y="11.5" width="3" height="2" fill="none" stroke="#6b6b6b"/></svg>
<div class="t" style="left:62.00px;top:976.00px;font-size:12px;color:#000;transform-origin:0 0;">Measure Meeting Minutes</div>
<div class="r" style="left:354px;top:171px;width:15px;height:804px;background:#dedede"></div>
<div class="r" style="left:354px;top:171px;width:15px;height:15px;background:#fff;box-sizing:border-box;border:1px solid #c8c8c8"></div>
<svg class="r" style="left:357px;top:175px" width="9" height="6" viewBox="0 0 9 6"><path d="M0.5 5H8.5L4.5 1Z" fill="#606060"/></svg>
<div class="r" style="left:354px;top:351px;width:15px;height:395px;background:#fff;box-sizing:border-box;border:1px solid #c4c4c4"></div>
<div class="r" style="left:354px;top:961px;width:15px;height:15px;background:#fff;box-sizing:border-box;border:1px solid #c8c8c8"></div>
<svg class="r" style="left:357px;top:965px" width="9" height="6" viewBox="0 0 9 6"><path d="M0.5 1H8.5L4.5 5Z" fill="#606060"/></svg>
<div class="r" style="left:370px;top:119px;width:685px;height:25px;background:#f2f2f2"></div>
<div class="t" style="left:395.60px;top:127.00px;font-size:12px;color:#1e1e1e;transform:scaleX(1.0774);transform-origin:0 0;">Project Today</div>
<div class="r" style="left:370px;top:144px;width:685px;height:831px;background:#ffffff"></div>
<div class="r" style="left:370px;top:144px;width:685px;height:1px;background:#a8a8a8"></div>
<div class="r" style="left:370px;top:144px;width:1px;height:831px;background:#a8a8a8"></div>
<div class="r" style="left:500px;top:120px;width:229px;height:25px;background:#fff;box-sizing:border-box;border-left:1px solid #c8c8c8;border-right:1px solid #c8c8c8"></div>
<div class="r" style="left:500px;top:120px;width:229px;height:2px;background:#3a3a3a"></div>
<div class="t" style="left:523.00px;top:126.00px;font-size:12px;color:#1a1a1a;font-weight:bold;transform:scaleX(1.0740);transform-origin:0 0;">Sub Pareto Pareto Chart-MDR</div>
<svg class="r" style="left:713px;top:128px" width="8" height="8" viewBox="0 0 8 8"><path d="M0.8 0.8L7.2 7.2M7.2 0.8L0.8 7.2" stroke="#555" stroke-width="1.2"/></svg>
<div class="r" style="left:371px;top:145px;width:684px;height:30px;overflow:hidden"><div class="t" style="left:25.70px;top:-14.00px;font-size:31px;color:#2f5d9b;transform-origin:0 0;">Pareto Chart Worksheet</div>
</div>
<div class="r" style="left:393px;top:172px;width:660px;height:2px;background:#2f5d9b"></div>
<div class="t" style="left:395.60px;top:194.00px;font-size:12px;color:#333333;font-weight:bold;transform:scaleX(1.0831);transform-origin:0 0;">Project Name:</div>
<div class="r" style="left:395px;top:212px;width:658px;height:23px;box-sizing:border-box;border:1px solid #d6d6d6"></div>
<div class="t" style="left:400.20px;top:218.00px;font-size:13px;color:#1a1a1a;transform:scaleX(1.0190);transform-origin:0 0;">KDL-Quality Improvement</div>
<div class="t" style="left:395.60px;top:261.00px;font-size:12.9px;color:#333333;font-weight:bold;transform-origin:0 0;">Prepared By:</div>
<div class="r" style="left:395px;top:278px;width:428px;height:24px;box-sizing:border-box;border:1px solid #d6d6d6"></div>
<div class="t" style="left:400.20px;top:284.00px;font-size:13px;color:#1a1a1a;transform-origin:0 0;">Terry Jones</div>
<div class="t" style="left:856.60px;top:261.00px;font-size:12.9px;color:#333333;font-weight:bold;transform-origin:0 0;">Prepared Date:</div>
<div class="r" style="left:856px;top:278px;width:197px;height:24px;box-sizing:border-box;border:1px solid #d6d6d6"></div>
<div class="t" style="left:861.00px;top:284.00px;font-size:13px;color:#1a1a1a;transform-origin:0 0;">5/1/2020</div>
<div class="t" style="left:395.00px;top:331.00px;font-size:22px;color:#4f82c9;transform-origin:0 0;">Input</div>
<div class="r" style="left:393px;top:360px;width:660px;height:1px;background:#94b3df"></div>
<div class="t" style="left:395.60px;top:381.00px;font-size:12.9px;color:#333333;font-weight:bold;transform-origin:0 0;">Describe the data:</div>
<div class="r" style="left:395px;top:399px;width:655px;height:23px;box-sizing:border-box;border:1px solid #d6d6d6"></div>
<div class="t" style="left:400.20px;top:405.00px;font-size:13px;color:#1a1a1a;transform-origin:0 0;">Sub Pareto MDR</div>
<div class="t" style="left:394.70px;top:451.00px;font-size:22px;color:#4f82c9;transform:scaleX(1.0175);transform-origin:0 0;">Output</div>
<div class="r" style="left:393px;top:481px;width:662px;height:1px;background:#94b3df"></div>
<svg class="r" style="left:400px;top:488px" width="17" height="16" viewBox="0 0 17 16"><path d="M0.5 0V14.5H16" stroke="#8a8a8a" fill="none"/><rect x="2.5" y="1" width="3" height="12" fill="#2a6ab8"/><rect x="7" y="5" width="3" height="8" fill="#f6bd60"/><rect x="11.5" y="8" width="3" height="5" fill="#7a7a7a"/></svg>
<div class="t" style="left:421.30px;top:490.00px;font-size:12px;color:#1a1a1a;transform-origin:0 0;">Click here to copy and paste a Pareto chart from another application</div>
<div class="t" style="left:1038.50px;top:491.00px;font-size:10px;color:#7a7a7a;transform-origin:0 0;">open</div>
<svg class="r" style="left:400px;top:511px" width="17" height="16" viewBox="0 0 17 16"><path d="M0.5 0V14.5H16" stroke="#8a8a8a" fill="none"/><rect x="2.5" y="1" width="3" height="12" fill="#2a6ab8"/><rect x="7" y="5" width="3" height="8" fill="#f6bd60"/><rect x="11.5" y="8" width="3" height="5" fill="#7a7a7a"/></svg>
<div class="t" style="left:421.30px;top:513.00px;font-size:12px;color:#1a1a1a;transform-origin:0 0;">Click here to enter data directly into a table and create a Pareto chart</div>
<div class="t" style="left:1038.50px;top:514.00px;font-size:10px;color:#7a7a7a;transform-origin:0 0;">close</div>
<div class="t" style="left:405.30px;top:545.00px;font-size:15.3px;color:#4f82c9;transform-origin:0 0;">Pareto Chart</div>
<div class="r" style="left:399px;top:569px;width:654px;height:400px;background:#e5e5e5;box-sizing:border-box;border:1px solid #d0d0d0"></div>
<div class="r" style="left:471px;top:580px;width:519px;height:263px;background:#fff"></div>
<svg class="r" style="left:0;top:0" width="1055" height="975"><path d="M472 793.5H989" stroke="#d2d2d2" stroke-dasharray="4 4"/><path d="M472 743.5H989" stroke="#d2d2d2" stroke-dasharray="4 4"/><path d="M472 693.5H989" stroke="#d2d2d2" stroke-dasharray="4 4"/><path d="M472 644.5H989" stroke="#d2d2d2" stroke-dasharray="4 4"/><path d="M472 594.5H989" stroke="#d2d2d2" stroke-dasharray="4 4"/><path d="M494.5 842V747.5H588.5V842" fill="#7ba6db" stroke="#4a4a4a" stroke-width="1"/><path d="M588.5 842V750.5H683.5V842" fill="#7ba6db" stroke="#4a4a4a" stroke-width="1"/><path d="M683.5 842V804.5H777.5V842" fill="#7ba6db" stroke="#4a4a4a" stroke-width="1"/><path d="M777.5 842V830.5H871.5V842" fill="#7ba6db" stroke="#4a4a4a" stroke-width="1"/><path d="M871.5 842V838.5H966.5V842" fill="#7ba6db" stroke="#4a4a4a" stroke-width="1"/><path d="M471.5 842V580.5H989.5V842" fill="none" stroke="#8e8e8e"/><path d="M471 842.5H990" stroke="#9a9a9a"/><path d="M465 842.5H470" stroke="#8e8e8e"/><path d="M465 778.5H470" stroke="#8e8e8e"/><path d="M465 713.5H470" stroke="#8e8e8e"/><path d="M465 648.5H470" stroke="#8e8e8e"/><path d="M465 583.5H470" stroke="#8e8e8e"/><path d="M990 842.5H995" stroke="#8e8e8e"/><path d="M990 793.5H995" stroke="#8e8e8e"/><path d="M990 743.5H995" stroke="#8e8e8e"/><path d="M990 693.5H995" stroke="#8e8e8e"/><path d="M990 644.5H995" stroke="#8e8e8e"/><path d="M990 594.5H995" stroke="#8e8e8e"/><path d="M542.5 843V848" stroke="#8e8e8e"/><path d="M636.5 843V848" stroke="#8e8e8e"/><path d="M730.5 843V848" stroke="#8e8e8e"/><path d="M824.5 843V848" stroke="#8e8e8e"/><path d="M919.5 843V848" stroke="#8e8e8e"/><polyline points="541.5,745.7 636.0,651.5 730.5,612.2 824.5,599.0 919.0,593.8" fill="none" stroke="#1f60b3" stroke-width="1.4"/><circle cx="541.5" cy="745.7" r="3.5" fill="#1357a6"/><circle cx="636.0" cy="651.5" r="3.5" fill="#1357a6"/><circle cx="730.5" cy="612.2" r="3.5" fill="#1357a6"/><circle cx="824.5" cy="599.0" r="3.5" fill="#1357a6"/><circle cx="919.0" cy="593.8" r="3.5" fill="#1357a6"/></svg>
<div class="t" style="left:457.05px;top:836.00px;font-size:12.5px;color:#1a1a1a;transform:scaleX(0.8900);transform-origin:100% 0;">0</div>
<div class="t" style="left:450.10px;top:771.00px;font-size:12.5px;color:#1a1a1a;transform:scaleX(0.8900);transform-origin:100% 0;">25</div>
<div class="t" style="left:450.10px;top:706.00px;font-size:12.5px;color:#1a1a1a;transform:scaleX(0.8900);transform-origin:100% 0;">50</div>
<div class="t" style="left:450.10px;top:641.00px;font-size:12.5px;color:#1a1a1a;transform:scaleX(0.8900);transform-origin:100% 0;">75</div>
<div class="t" style="left:443.14px;top:576.00px;font-size:12.5px;color:#1a1a1a;transform:scaleX(0.8900);transform-origin:100% 0;">100</div>
<div class="t" style="left:997.00px;top:836.00px;font-size:12.5px;color:#1a1a1a;transform:scaleX(0.8900);transform-origin:0 0;">0</div>
<div class="t" style="left:997.00px;top:787.00px;font-size:12.5px;color:#1a1a1a;transform:scaleX(0.8900);transform-origin:0 0;">20</div>
<div class="t" style="left:997.00px;top:737.00px;font-size:12.5px;color:#1a1a1a;transform:scaleX(0.8900);transform-origin:0 0;">40</div>
<div class="t" style="left:997.00px;top:687.00px;font-size:12.5px;color:#1a1a1a;transform:scaleX(0.8900);transform-origin:0 0;">60</div>
<div class="t" style="left:997.00px;top:638.00px;font-size:12.5px;color:#1a1a1a;transform:scaleX(0.8900);transform-origin:0 0;">80</div>
<div class="t" style="left:997.00px;top:588.00px;font-size:12.5px;color:#1a1a1a;transform:scaleX(0.8900);transform-origin:0 0;">100</div>
<div class="t" style="left:488.00px;top:853.00px;font-size:11.5px;color:#1a1a1a;transform:scaleX(0.9353);transform-origin:0 0;">Mixing  / Milling Issues</div>
<div class="t" style="left:567.90px;top:868.00px;font-size:11.5px;color:#1a1a1a;transform:scaleX(0.9365);transform-origin:0 0;">Weighment at Compounding</div>
<div class="t" style="left:657.50px;top:852.00px;font-size:11.5px;color:#1a1a1a;transform:scaleX(0.9303);transform-origin:0 0;">Formulation issue / Compound</div>
<div class="t" style="left:803.20px;top:867.00px;font-size:11.5px;color:#1a1a1a;transform:scaleX(0.9136);transform-origin:0 0;">Unknown</div>
<div class="t" style="left:903.50px;top:852.00px;font-size:11.5px;color:#1a1a1a;transform:scaleX(0.9127);transform-origin:0 0;">Others</div>
<div class="t" style="left:410.00px;top:894.00px;font-size:12px;color:#1a1a1a;transform:scaleX(0.9563);transform-origin:0 0;">Data values</div>
<div class="t" style="left:431.90px;top:910.00px;font-size:12px;color:#1a1a1a;transform:scaleX(0.9358);transform-origin:0 0;">Percent</div>
<div class="t" style="left:433.50px;top:927.00px;font-size:12px;color:#1a1a1a;transform:scaleX(0.9430);transform-origin:0 0;">Cum %</div>
<div class="t" style="left:534.55px;top:894.00px;font-size:12.5px;color:#1a1a1a;transform:scaleX(0.8900);transform-origin:50% 0;">37</div>
<div class="t" style="left:629.05px;top:894.00px;font-size:12.5px;color:#1a1a1a;transform:scaleX(0.8900);transform-origin:50% 0;">36</div>
<div class="t" style="left:723.55px;top:894.00px;font-size:12.5px;color:#1a1a1a;transform:scaleX(0.8900);transform-origin:50% 0;">15</div>
<div class="t" style="left:821.02px;top:894.00px;font-size:12.5px;color:#1a1a1a;transform:scaleX(0.8900);transform-origin:50% 0;">5</div>
<div class="t" style="left:915.52px;top:894.00px;font-size:12.5px;color:#1a1a1a;transform:scaleX(0.8900);transform-origin:50% 0;">2</div>
<div class="t" style="left:529.34px;top:910.00px;font-size:12.5px;color:#1a1a1a;transform:scaleX(0.8900);transform-origin:50% 0;">38.9</div>
<div class="t" style="left:623.84px;top:910.00px;font-size:12.5px;color:#1a1a1a;transform:scaleX(0.8900);transform-origin:50% 0;">37.9</div>
<div class="t" style="left:718.34px;top:910.00px;font-size:12.5px;color:#1a1a1a;transform:scaleX(0.8900);transform-origin:50% 0;">15.8</div>
<div class="t" style="left:815.81px;top:910.00px;font-size:12.5px;color:#1a1a1a;transform:scaleX(0.8900);transform-origin:50% 0;">5.3</div>
<div class="t" style="left:910.31px;top:910.00px;font-size:12.5px;color:#1a1a1a;transform:scaleX(0.8900);transform-origin:50% 0;">2.1</div>
<div class="t" style="left:529.34px;top:926.00px;font-size:12.5px;color:#1a1a1a;transform:scaleX(0.8900);transform-origin:50% 0;">38.9</div>
<div class="t" style="left:623.84px;top:926.00px;font-size:12.5px;color:#1a1a1a;transform:scaleX(0.8900);transform-origin:50% 0;">76.8</div>
<div class="t" style="left:718.34px;top:926.00px;font-size:12.5px;color:#1a1a1a;transform:scaleX(0.8900);transform-origin:50% 0;">92.6</div>
<div class="t" style="left:812.34px;top:926.00px;font-size:12.5px;color:#1a1a1a;transform:scaleX(0.8900);transform-origin:50% 0;">97.9</div>
<div class="t" style="left:908.57px;top:926.00px;font-size:12.5px;color:#1a1a1a;transform:scaleX(0.8900);transform-origin:50% 0;">100</div>
<div class="t" style="left:673.60px;top:942.00px;font-size:14px;color:#000;font-weight:bold;transform:scaleX(1.0439);transform-origin:0 0;">Label / Category</div>
<div class="t" style="left:409.3px;top:703.7px;font-size:14px;font-weight:bold;line-height:14px;color:#000;transform:rotate(-90deg) scaleX(0.997);transform-origin:50% 50%">Count</div>
<div class="t" style="left:1007.1px;top:704.3px;font-size:14px;font-weight:bold;line-height:14px;color:#000;transform:rotate(-90deg) scaleX(0.970);transform-origin:50% 50%">Percent</div>
</body></html>
